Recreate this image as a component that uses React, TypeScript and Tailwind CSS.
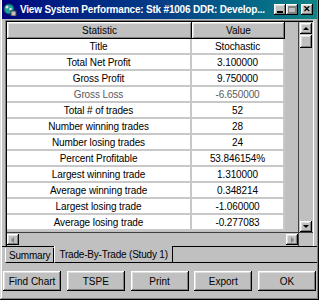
const raised =
  "shadow-[inset_-1px_-1px_0_#000,inset_1px_1px_0_#fff,inset_-2px_-2px_0_#808080,inset_2px_2px_0_#dfdfdf]";

const rows: [string, string][] = [
  ["Title", "Stochastic"],
  ["Total Net Profit", "3.100000"],
  ["Gross Profit", "9.750000"],
  ["Gross Loss", "-6.650000"],
  ["Total # of trades", "52"],
  ["Number winning trades", "28"],
  ["Number losing trades", "24"],
  ["Percent Profitable", "53.846154%"],
  ["Largest winning trade", "1.310000"],
  ["Average winning trade", "0.348214"],
  ["Largest losing trade", "-1.060000"],
  ["Average losing trade", "-0.277083"],
];

function TitleButton({ children, disabled }: { children: React.ReactNode; disabled?: boolean }) {
  return (
    <div
      className={`flex h-[11px] w-[12px] items-center justify-center bg-[#c0c0c0] ${raised} ${
        disabled ? "text-[#808080]" : "text-black"
      }`}
    >
      {children}
    </div>
  );
}

function ArrowButton({ dir }: { dir: "up" | "down" | "left" | "right" }) {
  const paths = {
    up: "M1 5 L4 2 L7 5 Z",
    down: "M1 2 L4 5 L7 2 Z",
    left: "M5 1 L2 4 L5 7 Z",
    right: "M3 1 L6 4 L3 7 Z",
  };
  const dim = dir === "left" || dir === "right";
  return (
    <div className={`flex h-[11px] w-[12px] items-center justify-center bg-[#c0c0c0] ${raised}`}>
      <svg width="8" height="8" viewBox="0 0 8 8">
        <path d={paths[dir]} fill={dim ? "#808080" : "#000"} />
      </svg>
    </div>
  );
}

export default function App() {
  return (
    <div
      className="flex h-[300px] w-[319px] flex-col bg-[#c0c0c0] px-[2px] pb-[2px] shadow-[inset_-1px_-1px_0_#000,inset_1px_0_0_#dfdfdf,inset_-2px_-2px_0_#808080,inset_2px_0_0_#fff]"
      style={{ fontFamily: '"Liberation Sans", Arial, sans-serif' }}
    >
      {/* title bar */}
      <div className="flex h-[19px] shrink-0 items-center bg-gradient-to-r from-[#000080] via-[#0a3c86] to-[#128484] pl-[1px] pr-[4px]">
        <svg width="14" height="13" viewBox="0 0 14 13" className="shrink-0">
          <circle cx="6" cy="6" r="5" fill="#1c9c9c" stroke="#0c4c4c" strokeWidth="1" />
          <circle cx="4" cy="4" r="1.5" fill="#e0e0e0" />
          <circle cx="7.5" cy="6" r="1.3" fill="#e0e0e0" />
          <rect x="8" y="8" width="5" height="5" fill="#c0c0c0" stroke="#404040" strokeWidth="1" />
        </svg>
        <span className="ml-[3px] whitespace-nowrap text-[10px] font-bold tracking-[-0.2px] text-white">
          View System Performance: Stk #1006 DDR: Develop...
        </span>
        <div className="ml-auto flex items-center">
          <TitleButton>
            <div className="mt-[5px] h-[2px] w-[6px] bg-black" />
          </TitleButton>
          <TitleButton disabled>
            <div className="h-[7px] w-[8px] border border-t-2 border-[#808080]" />
          </TitleButton>
          <div className="ml-[3px]">
            <TitleButton>
              <span className="text-[9px] font-bold leading-none">✕</span>
            </TitleButton>
          </div>
        </div>
      </div>

      {/* grid frame */}
      <div className="mx-[3px] mt-[1px] flex flex-col border-t border-l border-[#808080] border-r border-r-white">
        <div className="flex flex-col border-t border-l border-black">
          <div className="flex h-[210px]">
            {/* table */}
            <div className="flex w-[291px] flex-col bg-[#c0c0c0]">
              <div className="flex h-[17px] shrink-0 text-[10px] text-black">
                <div className={`flex w-[185px] items-center justify-center bg-[#c0c0c0] ${raised}`}>
                  Statistic
                </div>
                <div className={`flex w-[93px] items-center justify-center bg-[#c0c0c0] ${raised}`}>
                  Value
                </div>
              </div>
              {rows.map(([label, value]) => {
                const dim = label === "Gross Loss";
                return (
                  <div key={label} className="flex h-[16px] shrink-0 text-[10px] tracking-[-0.1px]">
                    <div
                      className={`flex w-[185px] items-center justify-center border-b-2 border-r-2 border-[#c8c8c8] bg-white ${
                        dim ? "text-[#5a5a5a]" : "text-black"
                      }`}
                    >
                      {label}
                    </div>
                    <div
                      className={`flex w-[93px] items-center justify-center border-b-2 border-r-2 border-[#c8c8c8] bg-white ${
                        dim ? "text-[#5a5a5a]" : "text-black"
                      }`}
                    >
                      {value}
                    </div>
                  </div>
                );
              })}
            </div>
            {/* vertical scrollbar */}
            <div className="flex w-[15px] flex-col items-center border-l border-[#404040] bg-[#c0c0c0] pt-[1px]">
              <ArrowButton dir="up" />
              <div className={`mt-[1px] h-[13px] w-[12px] bg-[#c0c0c0] ${raised}`} />
              <div className="flex-1" />
              <ArrowButton dir="down" />
            </div>
          </div>
          {/* horizontal scrollbar */}
          <div className="flex h-[14px] border-t border-[#404040]">
            <div className="flex w-[291px] items-center justify-between">
              <ArrowButton dir="left" />
              <ArrowButton dir="right" />
            </div>
            <div className="w-[15px] border-l border-[#404040] bg-[#c0c0c0]" />
          </div>
        </div>
      </div>

      {/* tabs */}
      <div className="flex h-[17px] items-start border-t border-black">
        <div className="ml-[3px] mt-[1px] flex h-[15px] items-center justify-center whitespace-nowrap border-b border-r border-black border-l border-l-white px-[3px] text-[10px] tracking-[-0.2px] text-black">
          Summary
        </div>
        <div className="mt-[-1px] flex h-[17px] items-center justify-center whitespace-nowrap border-b border-r border-black border-l border-l-white bg-[#c0c0c0] px-[4px] text-[10px] tracking-[-0.2px] text-black">
          Trade-By-Trade (Study 1)
        </div>
        <div className="flex-1 self-end border-b border-black" />
      </div>

      {/* buttons */}
      <div className="mt-[8px] flex justify-between px-[1px]">
        {["Find Chart", "TSPE", "Print", "Export", "OK"].map((b) => (
          <div
            key={b}
            className={`flex h-[20px] w-[58px] items-center justify-center bg-[#c0c0c0] text-[10px] text-black ${raised}`}
          >
            {b}
          </div>
        ))}
      </div>
    </div>
  );
}
